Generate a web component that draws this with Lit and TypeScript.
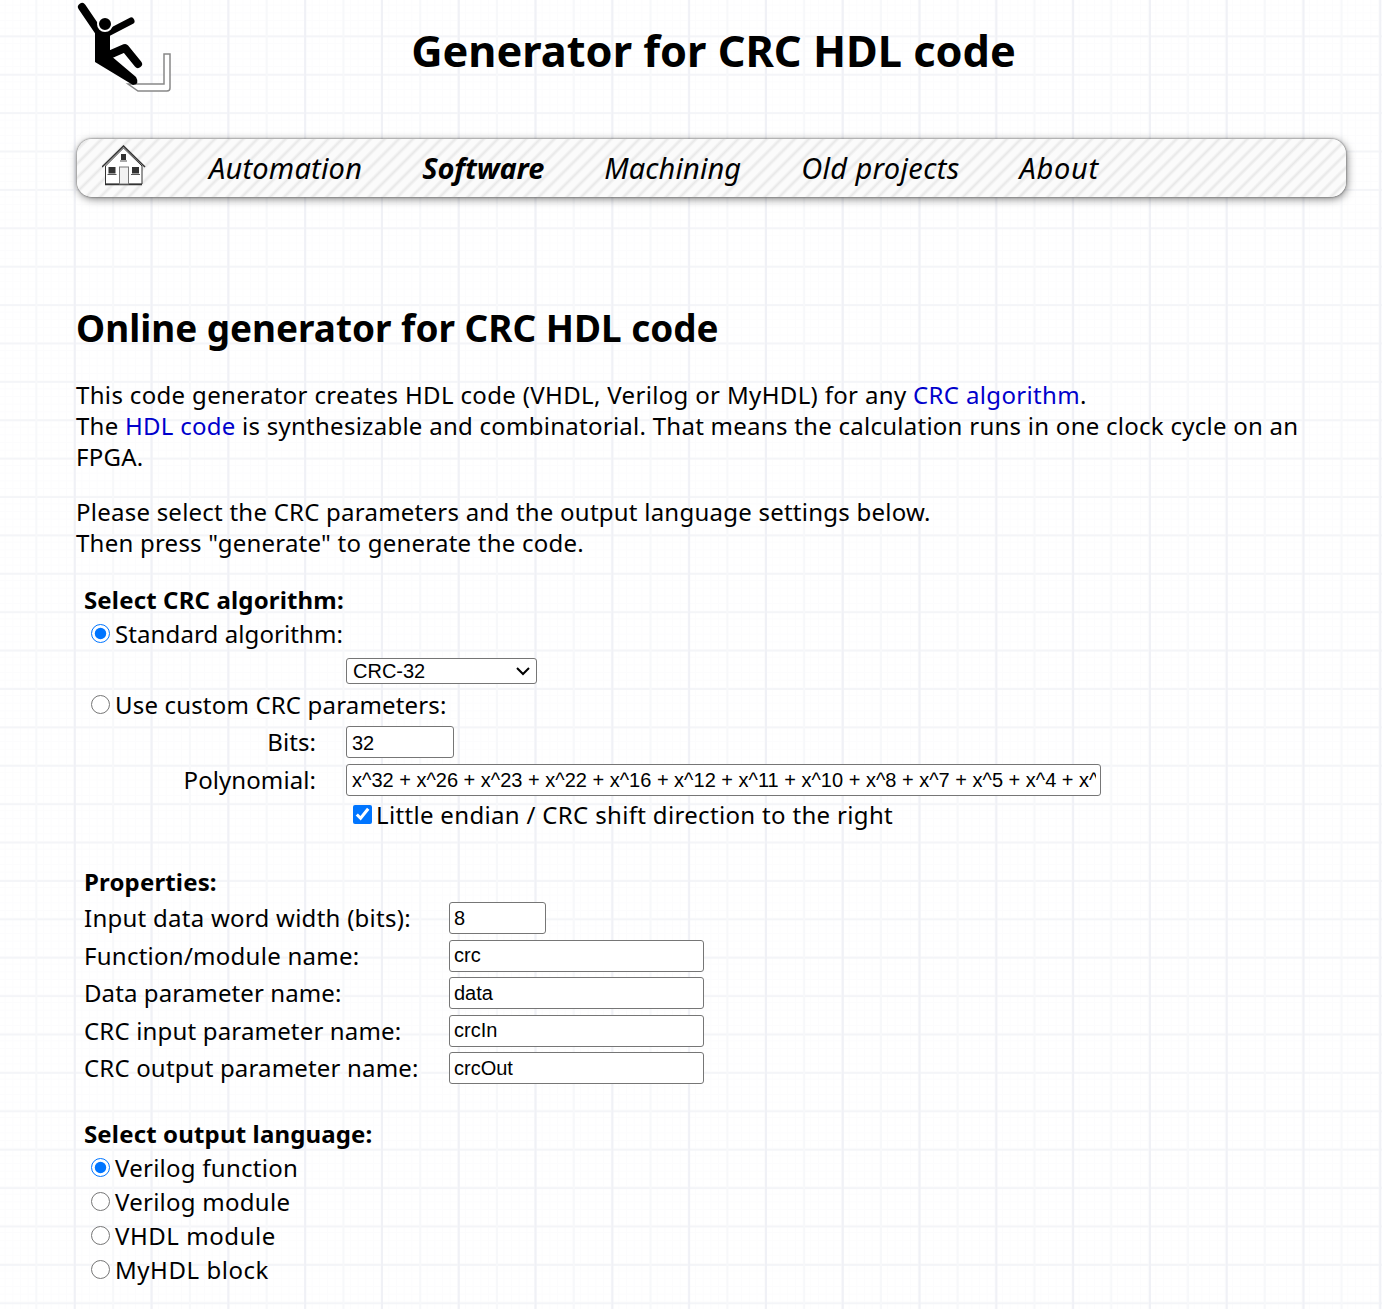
import { LitElement, html, css } from "lit";
import { customElement } from "lit/decorators.js";

@customElement("app-root")
export class AppRoot extends LitElement {
  static styles = css`
    :host { display: block; height: 1309px; overflow: hidden; color: #000; font-family: "Noto Sans", "Open Sans", sans-serif; font-size: 24px; line-height: 31px; letter-spacing: .26px;
      background-color: #fff;
      background-image:
        linear-gradient(to right, #f0f1f6 2px, transparent 2px),
        linear-gradient(to right, #f7f8fa 2px, transparent 2px),
        linear-gradient(to bottom, #f4f5f8 2px, transparent 2px),
        linear-gradient(to right, #fcfcfd 1px, transparent 1px),
        linear-gradient(to bottom, #fcfcfd 1px, transparent 1px);
      background-size: 76.8px 76.8px, 38.4px 38.4px, 38.4px 38.4px, 7.68px 7.68px, 7.68px 7.68px;
      background-position: -3px 0, -3px 0, 0 -3px, -3px 0, 0 -3px;
    }
    .page { padding: 0 36px 0 76px; }
    .head { display: flex; height: 139px; letter-spacing: 0; }
    .logo { width: 96px; height: 96px; flex: none; }
    h1 { margin: 23px 0 0 -91px; flex: 1; text-align: center; font-size: 43.3px; line-height: 56px; font-weight: 700; }
    nav { height: 58px; margin-left: 1px; border-radius: 15px; display: flex; align-items: center; gap: 60px; padding: 0 0 2px 25px; box-sizing: border-box; font-size: 29px; font-style: italic; letter-spacing: .1px;
      background: repeating-linear-gradient(135deg, #fbfbfb 0 5px, #e8e8e8 7.5px, #fbfbfb 10px);
      box-shadow: 0 0 2px #444, 1px 2px 8px rgba(0,0,0,.5); }
    nav svg { margin-bottom: 2px; flex: none; }
    nav b { font-weight: 700; letter-spacing: -.1px; }
    .w0 { letter-spacing: .2px; }
    .w1 { letter-spacing: .35px; }
    .w2 { letter-spacing: .7px; }
    h2 { margin: 106px 0 0; font-size: 36.9px; line-height: 50px; font-weight: 700; letter-spacing: 0; }
    p { margin: 0; }
    .intro { margin-top: 26px; }
    .line1 { letter-spacing: .34px; }
    .intro2 { margin-top: 24px; letter-spacing: .235px; }
    a { color: #00c; text-decoration: none; }
    h3 { margin: 0; font-size: 24px; line-height: 31px; font-weight: 700; letter-spacing: .15px; }
    input, select { font-family: "Liberation Sans", Arial, sans-serif; font-size: 20px; letter-spacing: 0; box-sizing: border-box; border: 1px solid #767676; border-radius: 3px; background: #fff; color: #000; padding: 0 4px; margin: 0; }
    input:not([type]) { padding: 2px 4px 0 5px; }
    select { appearance: none; padding-left: 6px; background-image: url("data:image/svg+xml,%3Csvg xmlns='http://www.w3.org/2000/svg' width='16' height='10'%3E%3Cpath d='M2 2l6 6 6-6' fill='none' stroke='%23000' stroke-width='2'/%3E%3C/svg%3E"); background-repeat: no-repeat; background-position: right 5px center; }
    .algo { margin: 26px 0 0 8px; }
    .algo h3, .lang h3 { margin-bottom: 1.5px; }
    .radio { display: flex; align-items: center; height: 34px; }
    input[type=radio], input[type=checkbox] { width: 19px; height: 19px; margin: 0 5px 0 7px; accent-color: #0075ff; padding: 0; flex: none; }
    input[type=checkbox] { margin-right: 4px; }
    .row { display: flex; align-items: center; box-sizing: border-box; }
    .r-sel { height: 37px; padding-top: 3px; }
    .r-bits { height: 39px; }
    .r-poly { height: 38px; }
    .r-chk { height: 32px; letter-spacing: .33px; }
    .lbl { width: 262px; text-align: right; padding-right: 30px; box-sizing: border-box; flex: none; letter-spacing: .08px; }
    .sel { width: 191px; height: 26px; }
    .bits { width: 108px; height: 32px; margin-top: 2px; }
    .poly { width: 755px; height: 32px; }
    .props { margin: 35.5px 0 0 8px; }
    .props h3 { margin-bottom: 1.8px; }
    .prow { display: flex; align-items: center; height: 37.5px; }
    .plbl { width: 365px; flex: none; }
    .prow input { margin-top: 1px; padding: 0 4px; }
    .num { width: 97px; height: 32px; }
    .txt { width: 255px; height: 32px; }
    .lang { margin: 31.7px 0 0 8px; }
    .t1 { letter-spacing: .1px; }
    .t2 { letter-spacing: .17px; }
    .t3 { letter-spacing: .55px; }
  `;
  render() {
    return html`<div class="page">
      <div class="head">
        <svg class="logo" viewBox="0 0 96 96">
          <path d="M88 54h6v34q0 3-3 3H62l-10-7h36z" fill="#fff" stroke="#888" stroke-width="1.5"/>
          <path d="M19 31 34 32V55L60 77Q64 84 57 85L19 62Z" fill="#000"/>
          <g fill="none" stroke="#000" stroke-linecap="round" stroke-linejoin="round">
            <path d="M6 7 25 35" stroke-width="8"/><path d="M28 35l27-14" stroke-width="7"/>
            <path d="M33 55l16-7 13 16" stroke-width="8"/>
          </g>
          <circle cx="29" cy="24" r="7" stroke="#fff" stroke-width="2"/>
        </svg>
        <h1>Generator for CRC HDL code</h1>
      </div>
      <nav>
        <svg width="47" height="42" viewBox="0 0 47 42" fill="none" stroke="#333" stroke-width="1">
          <path d="M3.5 21V39H40V21L21.500 3z" fill="#fff"/>
          <path d="M0 22 21.500 1 43 22" stroke-width="1.5"/>
          <path d="M3 39.500h37" stroke-width="1.500"/>
          <rect x="17.500" y="22" width="9" height="17" fill="#f2f2f2" stroke="#777"/>
          <path d="M6.500 22h7v6.500h-7zM30 22h7v6.500h-7zM19 9h5v6h-5z" fill="#333" stroke="none"/>
          <path d="M5.500 29.500h9M29 29.500h9M18 16h7" stroke="#555"/>
        </svg>
        <span class="w0">Automation</span><b>Software</b><span>Machining</span><span class="w1">Old projects</span><span class="w2">About</span>
      </nav>
      <h2>Online generator for CRC HDL code</h2>
      <p class="intro"><span class="line1">This code generator creates HDL code (VHDL, Verilog or MyHDL) for any <a>CRC algorithm</a>.</span><br>The <a>HDL code</a> is synthesizable and combinatorial. That means the calculation runs in one clock cycle on an FPGA.</p>
      <p class="intro2">Please select the CRC parameters and the output language settings below.<br>Then press "generate" to generate the code.</p>
      <div class="algo">
        <h3>Select CRC algorithm:</h3>
        <label class="radio t1"><input type="radio" name="a" checked>Standard algorithm:</label>
        <div class="row r-sel"><span class="lbl"></span><select class="sel"><option>CRC-32</option></select></div>
        <label class="radio t2"><input type="radio" name="a">Use custom CRC parameters:</label>
        <div class="row r-bits"><span class="lbl">Bits:</span><input class="bits" value="32"></div>
        <div class="row r-poly"><span class="lbl">Polynomial:</span><input class="poly" value="x^32 + x^26 + x^23 + x^22 + x^16 + x^12 + x^11 + x^10 + x^8 + x^7 + x^5 + x^4 + x^2 + x + 1"></div>
        <div class="row r-chk"><span class="lbl"></span><input type="checkbox" checked>Little endian / CRC shift direction to the right</div>
      </div>
      <div class="props">
        <h3>Properties:</h3>
        <div class="prow"><span class="plbl">Input data word width (bits):</span><input class="num" value="8"></div>
        <div class="prow"><span class="plbl">Function/module name:</span><input class="txt" value="crc"></div>
        <div class="prow"><span class="plbl t1">Data parameter name:</span><input class="txt" value="data"></div>
        <div class="prow"><span class="plbl t2">CRC input parameter name:</span><input class="txt" value="crcIn"></div>
        <div class="prow"><span class="plbl t2">CRC output parameter name:</span><input class="txt" value="crcOut"></div>
      </div>
      <div class="lang">
        <h3>Select output language:</h3>
        <label class="radio"><input type="radio" name="l" checked>Verilog function</label>
        <label class="radio"><input type="radio" name="l">Verilog module</label>
        <label class="radio t3"><input type="radio" name="l">VHDL module</label>
        <label class="radio t3"><input type="radio" name="l">MyHDL block</label>
      </div>
    </div>`;
  }
}
